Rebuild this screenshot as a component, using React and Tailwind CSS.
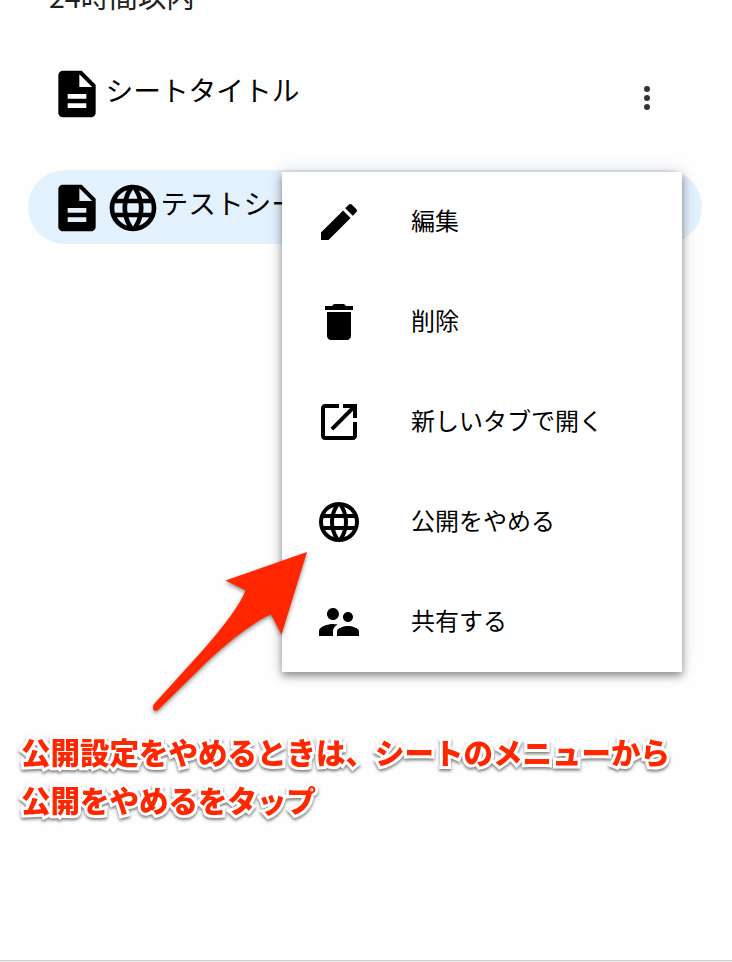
const PATHS = {
  description:
    'M14 2H6c-1.1 0-1.99.9-1.99 2L4 20c0 1.1.89 2 1.99 2H18c1.1 0 2-.9 2-2V8l-6-6zm2 16H8v-2h8v2zm0-4H8v-2h8v2zm-3-5V3.5L18.5 9H13z',
  web:
    'M16.36 14c.08-.66.14-1.32.14-2s-.06-1.34-.14-2h3.38c.16.64.26 1.31.26 2s-.1 1.36-.26 2m-5.15 5.56c.6-1.11 1.06-2.31 1.38-3.56h2.95a8.03 8.03 0 0 1-4.33 3.56M14.34 14H9.66c-.1-.66-.16-1.32-.16-2s.06-1.35.16-2h4.68c.09.65.16 1.32.16 2s-.07 1.34-.16 2M12 19.96c-.83-1.2-1.5-2.53-1.91-3.96h3.82c-.41 1.43-1.08 2.76-1.91 3.96M8 8H5.08A7.92 7.92 0 0 1 9.4 4.44C8.8 5.55 8.35 6.75 8 8m-2.92 8H8c.35 1.25.8 2.45 1.4 3.56A8 8 0 0 1 5.08 16m-.82-2C4.1 13.36 4 12.69 4 12s.1-1.36.26-2h3.38c-.08.66-.14 1.32-.14 2s.06 1.34.14 2M12 4.03c.83 1.2 1.5 2.54 1.91 3.97h-3.82c.41-1.43 1.08-2.77 1.91-3.97M18.92 8h-2.95a15.7 15.7 0 0 0-1.38-3.56c1.84.63 3.37 1.9 4.33 3.56M12 2C6.47 2 2 6.5 2 12a10 10 0 0 0 10 10 10 10 0 0 0 10-10A10 10 0 0 0 12 2z',
  edit:
    'M3 17.25V21h3.75L17.81 9.94l-3.75-3.75L3 17.25zM20.71 7.04c.39-.39.39-1.02 0-1.41l-2.34-2.34c-.39-.39-1.02-.39-1.41 0l-1.83 1.83 3.75 3.75 1.83-1.83z',
  remove:
    'M6 19c0 1.1.9 2 2 2h8c1.1 0 2-.9 2-2V7H6v12zM19 4h-3.5l-1-1h-5l-1 1H5v2h14V4z',
  openInNew:
    'M19 19H5V5h7V3H5c-1.11 0-2 .9-2 2v14c0 1.1.89 2 2 2h14c1.1 0 2-.9 2-2v-7h-2v7zM14 3v2h3.59l-9.83 9.83 1.41 1.41L19 6.41V10h2V3h-7z',
  share:
    'M16.5 12c1.38 0 2.49-1.12 2.49-2.5S17.88 7 16.5 7C15.12 7 14 8.12 14 9.5s1.12 2.5 2.5 2.5zM9 11c1.66 0 2.99-1.34 2.99-3S10.66 5 9 5C7.34 5 6 6.34 6 8s1.34 3 3 3zm7.5 3c-1.83 0-5.5.92-5.5 2.75V19h11v-2.25c0-1.83-3.67-2.75-5.5-2.75zM9 13c-2.33 0-7 1.17-7 3.5V19h7v-2.25c0-.85.33-2.34 2.37-3.47C10.5 13.1 9.66 13 9 13z',
};

function Icon({ name, className }) {
  return (
    <svg viewBox="0 0 24 24" fill="currentColor" className={`shrink-0 ${className}`}>
      <path d={PATHS[name]} />
    </svg>
  );
}

const MENU = [
  ['edit', '編集'],
  ['remove', '削除'],
  ['openInNew', '新しいタブで開く'],
  ['web', '公開をやめる'],
  ['share', '共有する'],
];

function Menu() {
  return (
    <ul className="absolute left-[282px] top-[172px] w-[400px] bg-white shadow-[0_4px_8px_rgba(0,0,0,0.4),0_0_16px_rgba(0,0,0,0.14)]">
      {MENU.map(([icon, label]) => (
        <li key={label} className="flex h-[100px] items-center pl-[33px]">
          <Icon name={icon} className="size-12" />
          <span className="mb-1 ml-12 text-2xl leading-none whitespace-nowrap">{label}</span>
        </li>
      ))}
    </ul>
  );
}

function Arrow() {
  return (
    <svg
      viewBox="0 0 170 180"
      className="absolute left-[145px] top-[545px] h-[180px] w-[170px] overflow-visible drop-shadow-[0_2px_2px_rgba(0,0,0,0.45)]"
    >
      <path
        fill="#ff2600"
        d="M162 7 L136.500 89.500 L126 69.500 C108 77 82 98 64 115 L13.500 164.500 C11 167 8.500 166 8 163 C7.700 161 8.500 159.500 10 158 L58 105 C73 88 95 61 100.500 45.500 L80.500 35.500 Z"
      />
    </svg>
  );
}

export default function App() {
  return (
    <div className="relative flex h-[962px] w-[732px] flex-col overflow-hidden border-b border-[#eeeeee] bg-[#fefefe] font-['Noto_Sans_CJK_JP',sans-serif] text-black">
      <h2 className="-mt-5 ml-[49px] h-8 text-[28.5px] leading-8 text-[#212121]">24時間以内</h2>

      <div className="ml-7 mt-[45px] flex h-[74px] w-[674px] items-center pl-[20.5px]">
        <Icon name="description" className="size-14" />
        <span className="mb-2 ml-px text-[27.7px] leading-none whitespace-nowrap">シートタイトル</span>
        <div className="ml-auto mr-[52px] mt-2 flex flex-col gap-[3px]">
          <i className="size-1.5 rounded-full bg-[#333333]" />
          <i className="size-1.5 rounded-full bg-[#333333]" />
          <i className="size-1.5 rounded-full bg-[#333333]" />
        </div>
      </div>

      <div className="ml-7 mt-[39px] flex h-[74px] w-[674px] items-center rounded-full bg-[#e3f1fd] pl-[20.5px] pt-0.5">
        <Icon name="description" className="size-14" />
        <Icon name="web" className="size-14" />
        <span className="mb-2.5 text-[27.7px] leading-none whitespace-nowrap">テストシート</span>
      </div>

      <p className="ml-[21px] mt-[483px] text-[29.5px] leading-[48px] font-black whitespace-nowrap text-[#ff2600] [-webkit-text-stroke:6px_white] [paint-order:stroke_fill] drop-shadow-[0_2px_1.5px_rgba(0,0,0,0.5)]">
        公開設定をやめるときは、シートのメニューから
        <br />
        公開をやめるをタップ
      </p>

      <div className="mt-auto h-px bg-[#cfcfcf]" />

      <Menu />
      <Arrow />
    </div>
  );
}
